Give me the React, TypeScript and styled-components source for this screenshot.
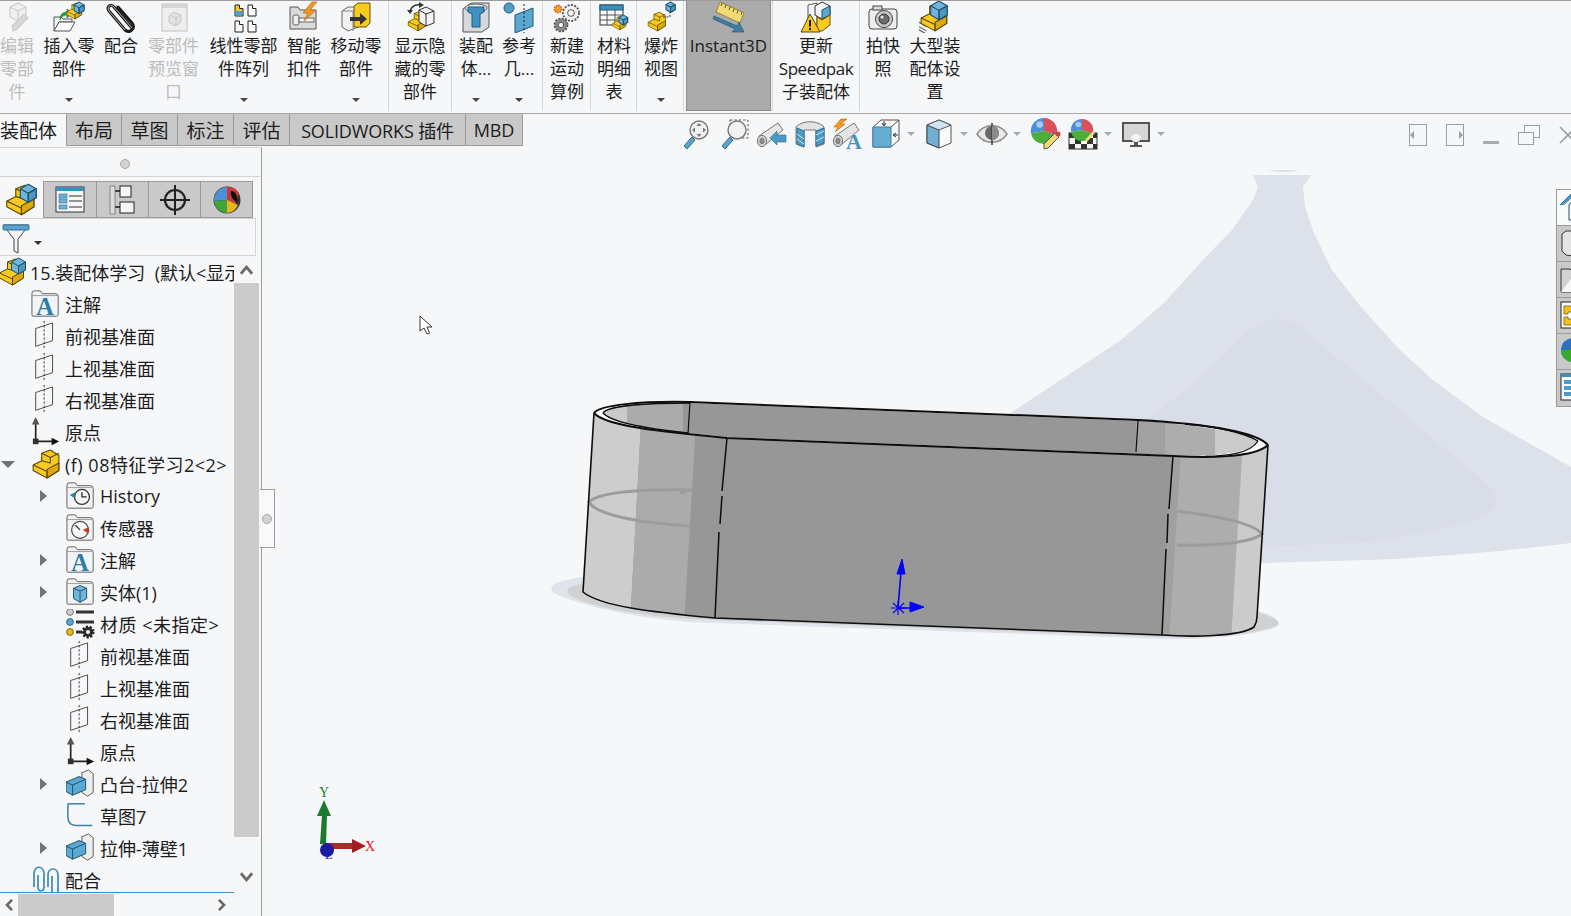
import React from "react";
import styled, { createGlobalStyle } from "styled-components";

const GlobalStyle = createGlobalStyle`
  html, body {
    margin: 0;
    padding: 0;
    background: #f5f7f9;
    overflow: hidden;
  }
  * {
    box-sizing: border-box;
  }
`;

const Page = styled.div`
  width: 1571px;
  height: 916px;
  overflow: hidden;
  display: flex;
  flex-direction: column;
  background: #f5f7f9;
  color: #1c1c1c;
  font-family: "Open Sans", "Noto Sans CJK SC", sans-serif;
`;

/* ---------- ribbon ---------- */

const Ribbon = styled.div`
  height: 114px;
  flex: none;
  display: flex;
  align-items: stretch;
  border-top: 1px solid #9d9d9d;
  border-bottom: 1px solid #a8a8a8;
  padding-bottom: 2px;
  overflow: hidden;
`;

const Group = styled.div<{ $left: number; $right: number; $line?: boolean }>`
  display: flex;
  gap: 9px;
  padding: 0 ${(p) => p.$right}px 0 ${(p) => p.$left}px;
  border-right: ${(p) => (p.$line === false ? "0" : "1px solid #d4d6d8")};
`;

const Item = styled.div<{ $w: number; $off?: boolean }>`
  width: ${(p) => p.$w}px;
  display: flex;
  flex-direction: column;
  align-items: center;
  font-size: 17px;
  line-height: 23px;
  text-align: center;
  white-space: nowrap;
  color: ${(p) => (p.$off ? "#bcbcbc" : "#1c1c1c")};
`;

const NarrowLine = styled.div`
  letter-spacing: -0.45px;
`;

const Pressed = styled.div`
  width: 85px;
  margin-left: 2px;
  margin-right: 1px;
  background: #ababab;
  border: 1px solid #8a8a8a;
  border-top: 0;
  display: flex;
  justify-content: center;
`;

const IconSlot = styled.div`
  height: 32px;
  flex: none;
  margin-bottom: 1px;
  display: flex;
  align-items: center;
  justify-content: center;
`;

const Caret = styled.span`
  margin-top: auto;
  margin-bottom: 9px;
  width: 0;
  height: 0;
  border-left: 4px solid transparent;
  border-right: 4px solid transparent;
  border-top: 4px solid #444;
`;

/* ---------- tab row ---------- */

const TabRow = styled.div`
  height: 33px;
  flex: none;
  display: flex;
  align-items: flex-start;
`;

const Tabs = styled.div`
  display: flex;
  height: 32px;
`;

const Tab = styled.div<{ $w: number; $on?: boolean; $latin?: boolean }>`
  width: ${(p) => p.$w}px;
  background: ${(p) => (p.$on ? "#f5f7f9" : "#c9c9c9")};
  border: 1px solid #9a9a9a;
  border-width: ${(p) => (p.$on ? "0 1px 0 0" : "0 1px 1px 0")};
  display: flex;
  align-items: center;
  justify-content: ${(p) => (p.$on ? "flex-start" : "center")};
  font-size: ${(p) => (p.$latin ? "18px" : "19px")};
  letter-spacing: ${(p) => (p.$latin ? "-0.15px" : "0")};
  white-space: nowrap;
`;

const Hud = styled.div`
  display: flex;
  align-items: center;
  gap: 4px;
  margin-left: 156px;
  height: 40px;
`;

const HudIcon = styled.div`
  width: 34px;
  height: 34px;
  display: flex;
  align-items: center;
  justify-content: center;
`;

const HudWithCaret = styled.div`
  display: flex;
  align-items: center;
  width: 49px;
`;

const HudCaret = styled.span`
  width: 0;
  height: 0;
  margin-left: 4px;
  border-left: 4px solid transparent;
  border-right: 4px solid transparent;
  border-top: 4px solid #a5adb2;
`;

const WinControls = styled.div`
  margin-left: auto;
  display: flex;
  gap: 19px;
  align-items: flex-start;
  padding-top: 10px;
`;

const WinIcon = styled.svg`
  display: block;
  flex: none;
`;

/* ---------- main area ---------- */

const Main = styled.div`
  flex: 1;
  min-height: 0;
  display: flex;
`;

const Sidebar = styled.aside`
  width: 262px;
  flex: none;
  position: relative;
  display: flex;
  flex-direction: column;
  border-right: 1px solid #9c9c9c;
`;

const HandleRow = styled.div`
  height: 30px;
  flex: none;
  width: 260px;
  border-top: 1px solid #d2d2d2;
  border-bottom: 1px solid #d2d2d2;
  display: flex;
  align-items: center;
  justify-content: center;
  padding: 4px 10px 0 0;
`;

const Dot = styled.span`
  width: 10px;
  height: 10px;
  border-radius: 50%;
  background: #d2d2d2;
  border: 1px solid #a8a8a8;
`;

const PanelTabs = styled.div`
  display: flex;
  height: 37px;
  flex: none;
  margin-top: 4px;
  width: 253px;
`;

const PanelTab = styled.div<{ $w: number; $on?: boolean }>`
  width: ${(p) => p.$w}px;
  display: flex;
  align-items: center;
  justify-content: center;
  background: ${(p) => (p.$on ? "#f5f7f9" : "#c9c9c9")};
  border: 1px solid #9a9a9a;
  border-width: ${(p) => (p.$on ? "0 1px 0 0" : "1px 1px 1px 0")};
`;

const FilterRow = styled.div`
  height: 38px;
  flex: none;
  width: 256px;
  border: 1px solid #d4d4d4;
  border-left: 0;
  display: flex;
  align-items: center;
  gap: 1px;
  padding: 3px 0 0 1px;
`;

const FilterCaret = styled.span`
  width: 0;
  height: 0;
  margin-top: 8px;
  border-left: 4px solid transparent;
  border-right: 4px solid transparent;
  border-top: 4px solid #333;
`;

const TreeArea = styled.div`
  height: 637px;
  flex: none;
  display: flex;
`;

const TreeCol = styled.div`
  width: 234px;
  flex: none;
  overflow: hidden;
  border-bottom: 1px solid #3a8fc9;
`;

const Row = styled.div<{ $level: number }>`
  height: 32px;
  display: flex;
  align-items: center;
  padding-left: ${(p) => (p.$level - 1) * 35}px;
  font-size: 18px;
  white-space: nowrap;
`;

const RootRow = styled(Row)`
  padding-left: 0;
`;

const RootIcon = styled.div`
  width: 30px;
  flex: none;
  display: flex;
  margin-left: -2px;
  margin-right: 2px;
`;

const RowLabel = styled.span<{ $wide?: boolean }>`
  letter-spacing: ${(p) => (p.$wide ? "0.5px" : "0")};
`;

const Toggle = styled.div`
  width: 16px;
  margin-right: 15px;
  flex: none;
  display: flex;
  justify-content: center;
`;

const RowIcon = styled.div`
  width: 30px;
  height: 30px;
  flex: none;
  margin-right: 4px;
  display: flex;
  align-items: center;
  justify-content: center;
`;

const ArrowRight = styled.span`
  width: 0;
  height: 0;
  border-top: 6px solid transparent;
  border-bottom: 6px solid transparent;
  border-left: 7px solid #6e7478;
`;

const ArrowDown = styled.span`
  width: 0;
  height: 0;
  border-left: 7px solid transparent;
  border-right: 7px solid transparent;
  border-top: 7px solid #6e7478;
`;

const VScroll = styled.div`
  width: 25px;
  flex: none;
  display: flex;
  flex-direction: column;
  align-items: stretch;
`;

const ScrollBtn = styled.div<{ $h: number }>`
  height: ${(p) => p.$h}px;
  flex: none;
  display: flex;
  align-items: center;
  justify-content: center;
`;

const VThumb = styled.div`
  height: 554px;
  flex: none;
  background: #cbcbcb;
`;

const HScroll = styled.div`
  flex: 1;
  width: 234px;
  display: flex;
  align-items: stretch;
  padding-top: 1px;
`;

const HThumb = styled.div`
  width: 96px;
  background: #cbcbcb;
`;

const HBtn = styled.div<{ $w: number; $end?: boolean }>`
  width: ${(p) => p.$w}px;
  display: flex;
  align-items: center;
  justify-content: ${(p) => (p.$end ? "flex-end" : "center")};
`;

const Splitter = styled.div`
  position: absolute;
  left: 260px;
  top: 342px;
  width: 15px;
  height: 59px;
  background: #f7f9fa;
  border: 1px solid #9c9c9c;
  border-left: 0;
  display: flex;
  align-items: center;
  justify-content: center;
`;

const Viewport = styled.main`
  flex: 1;
  position: relative;
  min-width: 0;
`;

const Scene = styled.svg`
  display: block;
  width: 100%;
  height: 100%;
`;

const TaskPane = styled.div`
  position: absolute;
  top: 42px;
  right: 0;
  width: 15px;
  border: 1px solid #9a9a9a;
  border-right: 0;
  overflow: hidden;
`;

const TaskTab = styled.div<{ $on?: boolean }>`
  height: 36px;
  background: ${(p) => (p.$on ? "#f7f9fa" : "#c9c9c9")};
  border-bottom: 1px solid #9a9a9a;
  padding: 3px 0 0 3px;
  &:last-child {
    border-bottom: 0;
  }
`;

/* ---------- drawn icons ---------- */

type Ic = React.FC<{ s?: number }>;
const Svg: React.FC<{ s?: number; v?: string; children: React.ReactNode }> = ({ s = 32, v = "0 0 32 32", children }) => (
  <svg width={s} height={s} viewBox={v} style={{ display: "block", flex: "none" }}>
    {children}
  </svg>
);

const YellowBlock = () => (
  <g stroke="#5c4700" strokeWidth="1" strokeLinejoin="round">
    <path d="M3 17 L11 13 L11 6 L19 3 L27 8 L27 22 L16 29 L3 22Z" fill="#f7ca1f" />
    <path d="M16 29 L27 22 L27 15 L16 21Z" fill="#dca80e" />
    <path d="M3 17 L16 23 V29" fill="none" />
    <path d="M11 6 L19 10 L27 6 M19 10 V15 L11 13" fill="none" />
  </g>
);

const BlueCube: React.FC<{ x?: number; y?: number; k?: number }> = ({ x = 0, y = 0, k = 1 }) => (
  <g transform={`translate(${x} ${y}) scale(${k})`} stroke="#1d4f6b" strokeWidth={1 / k} strokeLinejoin="round">
    <path d="M0 4 L7 0 L14 4 V12 L7 16 L0 12Z" fill="#6fb5dc" />
    <path d="M7 8 L14 4 V12 L7 16Z" fill="#4d97c2" />
    <path d="M0 4 L7 8 L14 4 M7 8 V16" fill="none" />
  </g>
);

const Assembly: Ic = ({ s = 32 }) => (
  <Svg s={s} v="2 1 29 30">
    <YellowBlock />
    <BlueCube x={15} y={2} k={1} />
  </Svg>
);

const PartYellow: Ic = ({ s = 30 }) => (
  <Svg s={s} v="2 2 26 28">
    <YellowBlock />
  </Svg>
);

const EditPart: Ic = () => (
  <Svg>
    <g stroke="#cdcdcd" fill="#eef0f2" strokeWidth="1.2">
      <path d="M9 6 L17 2 L25 6 V16 L17 20 L9 16Z" />
      <path d="M9 6 L17 10 L25 6 M17 10 V20" fill="none" />
      <path d="M12 30 L11 25 L23 13 L27 17 L15 29Z" fill="#d8d8d8" />
    </g>
  </Svg>
);

const InsertPart: Ic = () => (
  <Svg>
    <path d="M1 30 L1 16 L8 16 L10 18 L19 18 L19 21 L6 21 L1 30Z" fill="#f4f5f6" stroke="#555" />
    <path d="M1 30 L6 21 L22 21 L17 30Z" fill="#f9fafb" stroke="#555" />
    <path d="M7 19 C7 13 10 11 14 11 L14 8 L19 12.5 L14 17 L14 14 C11 14 9 15 7 19Z" fill="#25a044" stroke="#176b2c" strokeWidth="0.6" />
    <g transform="translate(12 0) scale(.62)">
      <YellowBlock />
    </g>
    <BlueCube x={21} y={1} k={0.72} />
  </Svg>
);

const PaperClip: Ic = () => (
  <Svg>
    <path d="M27 27 L9 6 C6 2 1 6 4 10 L20 29 C25 33 31 27 27 22 L13 6" fill="none" stroke="#1b1b1b" strokeWidth="3" strokeLinecap="round" />
    <path d="M27 27 L9 6 C6 2 1 6 4 10 L20 29" fill="none" stroke="#c4c4c4" strokeWidth="0.9" />
  </Svg>
);

const PreviewWin: Ic = () => (
  <Svg>
    <rect x="4" y="3" width="25" height="27" fill="#eceeef" stroke="#cfcfcf" strokeWidth="1.4" />
    <rect x="4" y="3" width="25" height="4" fill="#d5d5d5" />
    <path d="M11 15 L16 11 L23 14 V21 L17 25 L11 21Z" fill="#e2e2e2" stroke="#c6c6c6" />
    <path d="M14 15 L18 17 L23 14 M18 17 V25" fill="none" stroke="#c6c6c6" />
  </Svg>
);

const Mini: React.FC<{ x: number; y: number; on?: boolean }> = ({ x, y, on }) => (
  <g transform={`translate(${x} ${y})`}>
    <path d="M0 0 H4.5 V3.5 H8 V11 H0Z" fill={on ? "#f5c81e" : "#f7f8f9"} stroke="#222" />
    {on && <rect x="0.5" y="6" width="7" height="4.5" fill="#4aa3d0" />}
  </g>
);

const LinearPattern: Ic = () => (
  <Svg>
    <Mini x={7} y={4} on />
    <Mini x={20} y={4} />
    <Mini x={7} y={20} />
    <Mini x={20} y={20} />
  </Svg>
);

const SmartFastener: Ic = () => (
  <Svg>
    <path d="M2 28 V6 H10 L12 9 H28 V28Z" fill="#d9dadb" stroke="#555" />
    <rect x="5" y="14" width="6" height="10" rx="2" fill="#f0f0f0" stroke="#666" />
    <rect x="11" y="17" width="15" height="4" fill="#f3f3f3" stroke="#666" />
    <path d="M24 1 L15 12 L20 12 L16 20 L28 9 L22 9 L29 1Z" fill="#f39a1e" stroke="#b36a08" strokeWidth="0.7" />
  </Svg>
);

const MovePart: Ic = () => (
  <Svg>
    <path d="M2 10 L8 6 L18 6 V26 L8 30 L2 26Z" fill="#f1f1f1" stroke="#666" />
    <path d="M2 10 H13 V30" fill="none" stroke="#888" />
    <path d="M14 5 L18 2 H30 V22 L26 26 H14Z" fill="#f7ca1f" stroke="#6b5300" />
    <path d="M10 16 H20 V12 L27 18 L20 24 V20 H10Z" fill="#333" />
  </Svg>
);

const ShowHidden: Ic = () => (
  <Svg>
    <g transform="translate(2 8) scale(.75)">
      <YellowBlock />
    </g>
    <path d="M15 9 L22 6 L30 10 V22 L22 25 L15 21Z" fill="#f4f4f4" stroke="#333" />
    <path d="M15 9 L22 13 L30 10 M22 13 V25" fill="none" stroke="#333" />
    <path d="M6 11 C7 5 12 3 17 4" fill="none" stroke="#333" strokeWidth="1.6" />
    <path d="M3 9 L9 9 L6 13Z M15 1 L20 4 L15 7Z" fill="#333" />
  </Svg>
);

const AssemblyFeature: Ic = () => (
  <Svg>
    <path d="M3 8 L11 2 H29 V26 L22 31 H3Z" fill="#d7d8d9" stroke="#555" />
    <ellipse cx="16" cy="7" rx="11" ry="4" fill="#e8e8e8" stroke="#666" />
    <path d="M8 6 H24 V11 L20 13 V26 H12 V13 L8 11Z" fill="#3f92bf" stroke="#1d5a7c" />
  </Svg>
);

const RefGeometry: Ic = () => (
  <Svg>
    <circle cx="6" cy="7" r="5" fill="#4f9fcb" stroke="#1f5b7c" />
    <path d="M12 14 L30 7 V25 L12 32Z" fill="#5aa7d2" stroke="#1f5b7c" />
    <path d="M21 3 V32" stroke="#222" strokeDasharray="2 2" />
  </Svg>
);

const Gear: React.FC<{ x: number; y: number; r: number; c: string }> = ({ x, y, r, c }) => (
  <g transform={`translate(${x} ${y})`}>
    <circle r={r} fill={c} stroke="#555" strokeDasharray="2 1.4" strokeWidth="1.8" />
    <circle r={r * 0.42} fill="#f5f7f9" stroke="#555" />
  </g>
);

const Motion: Ic = () => (
  <Svg>
    <Gear x={20} y={12} r={8} c="#f2f2f2" />
    <Gear x={10} y={24} r={6.5} c="#8b8b8b" />
    <circle cx="7" cy="8" r="3.6" fill="#f4a623" stroke="#d9501e" strokeDasharray="1.4 1" strokeWidth="1.6" />
  </Svg>
);

const Bom: Ic = () => (
  <Svg>
    <rect x="2" y="4" width="23" height="20" fill="#f8f9fa" stroke="#333" />
    <rect x="2" y="4" width="23" height="5" fill="#3f8fbc" stroke="#1d5a7c" />
    <path d="M2 14 H25 M2 19 H25 M9 9 V24 M17 9 V24" stroke="#555" fill="none" />
    <g transform="translate(13 13) scale(.55)">
      <YellowBlock />
    </g>
    <BlueCube x={21} y={14} k={0.62} />
  </Svg>
);

const Explode: Ic = () => (
  <Svg>
    <g transform="translate(1 9) scale(.72)">
      <YellowBlock />
    </g>
    <path d="M18 16 H25 V9" fill="none" stroke="#333" strokeDasharray="2 1.5" />
    <BlueCube x={21} y={1} k={0.65} />
  </Svg>
);

const Instant3D: Ic = () => (
  <Svg s={34} v="0 0 34 32">
    <path d="M4 11 L8 1 L32 12 L28 22Z" fill="#eedb76" stroke="#7a6a18" strokeWidth="0.7" />
    <path d="M10 2 L9 5 M14 4 L13 7 M18 6 L17 9 M22 8 L21 11 M26 9.5 L25 12.5 M30 11 L29 14" stroke="#6d5e10" />
    <path d="M2 15 L25 25 L27 21 L32 31 L20 31 L23 28 L1 18Z" fill="#3f7ea3" stroke="#23536f" strokeWidth="0.6" />
  </Svg>
);

const Speedpak: Ic = () => (
  <Svg>
    <path d="M8 4 L17 2 L17 28 L8 26Z" fill="#f5f6f7" stroke="#555" />
    <path d="M15 5 L22 1 L30 5 V14 L22 18 L15 14Z" fill="#f4f5f6" stroke="#333" />
    <path d="M22 9 L30 5 V14 L22 18Z" fill="#5ba8d2" stroke="#1d4f6b" />
    <path d="M17 16 L22 19 L30 14 V24 L22 30 H17Z" fill="#f7ca1f" stroke="#6b5300" />
    <path d="M10 13 L20 31 H1Z" fill="#f7c81e" stroke="#5c4700" />
    <path d="M10 19 V25.5" stroke="#111" strokeWidth="2" />
    <circle cx="10" cy="28" r="1.2" fill="#111" />
  </Svg>
);

const Camera: Ic = () => (
  <Svg>
    <rect x="2" y="8" width="28" height="20" rx="3" fill="#eceded" stroke="#444" />
    <rect x="6" y="5" width="9" height="4" fill="#dadada" stroke="#444" />
    <circle cx="17" cy="18" r="8.5" fill="#c7c8c9" stroke="#444" />
    <circle cx="17" cy="18" r="5" fill="#6c6d6e" stroke="#333" />
    <circle cx="15" cy="16" r="1.6" fill="#e5e5e5" />
  </Svg>
);

const LargeAssembly: Ic = () => (
  <Svg v="1 1 30 30">
    <path d="M1 25 L8 29 M1 21 L8 25 M1 28 L8 32" stroke="#555" />
    <YellowBlock />
    <BlueCube x={12} y={1} k={1.1} />
  </Svg>
);

/* hud */

const Lens: React.FC<{ children?: React.ReactNode }> = ({ children }) => (
  <>
    <path d="M12 19 L4 28 L7 31 L15 22Z" fill="#5ba3c9" stroke="#2e6e90" />
    {children}
    <circle cx="19" cy="12" r="9" fill="#eff1f2" stroke="#777" strokeWidth="1.4" />
  </>
);

const ZoomFit: Ic = () => (
  <Svg>
    <Lens />
    <path d="M19 5 L21.5 8 H16.5Z M19 19 L21.5 16 H16.5Z M12 12 L15 9.5 V14.5Z M26 12 L23 9.5 V14.5Z" fill="#777" />
  </Svg>
);

const ZoomArea: Ic = () => (
  <Svg>
    <rect x="12" y="2" width="18" height="18" fill="none" stroke="#555" strokeDasharray="2.4 2" />
    <Lens />
  </Svg>
);

const Binocular = () => (
  <g stroke="#777" strokeWidth="1">
    <path d="M3 18 L22 5 L27 12 L9 27Z" fill="#e4e5e6" />
    <ellipse cx="6" cy="23" rx="4.6" ry="5.6" fill="#cfd0d1" />
    <ellipse cx="6" cy="23" rx="2" ry="2.8" fill="#8f9091" />
  </g>
);

const PrevView: Ic = () => (
  <Svg>
    <Binocular />
    <path d="M14 20 L21 13 V17 H30 V24 H21 V27Z" fill="#4c98c4" stroke="#2e6e90" strokeWidth="0.6" />
  </Svg>
);

const SectionView: Ic = () => (
  <Svg>
    <path d="M2 9 C8 2 24 2 30 9 V26 L22 29 V12 H10 V29 L2 26Z" fill="#e2e3e4" stroke="#777" />
    <path d="M3 10 L10 13 V29 L3 26Z M22 13 L30 10 V25 L22 28Z" fill="#4d9cc6" stroke="#2e6e90" />
    <path d="M3 16 L10 21 M3 21 L10 26 M22 17 L30 13 M22 23 L30 19" stroke="#cfe6f2" />
  </Svg>
);

const DynAnnotation: Ic = () => (
  <Svg>
    <Binocular />
    <path d="M9 1 L2 9 L6 9 L3 14 L13 6 L9 6 L15 1Z" fill="#f39a1e" stroke="#b36a08" strokeWidth="0.6" />
    <text x="22" y="31" fontFamily="Liberation Serif" fontWeight="700" fontSize="22" fill="#4a93bd" textAnchor="middle">A</text>
  </Svg>
);

const ViewOrient: Ic = () => (
  <Svg>
    <path d="M3 9 L11 2 H29 V22 L21 29 H3Z" fill="#f5f7f9" stroke="#555" />
    <path d="M3 9 H21 V29 H3Z" fill="#67add3" stroke="#3d7ea4" />
    <path d="M21 9 L29 2" stroke="#555" />
    <path d="M14 3 V7 M12 5 L14 8 L16 5 M28 17 H24 M26 15 L23 17 L26 19" fill="none" stroke="#333" />
  </Svg>
);

const DisplayStyle: Ic = () => (
  <Svg>
    <path d="M4 7 L16 2 L28 7 V25 L16 30 L4 25Z" fill="#f8f9fa" stroke="#555" />
    <path d="M4 7 L16 12 V30 L4 25Z" fill="#6fb0d4" stroke="#444" />
    <path d="M4 7 L16 2 L28 7 L16 12Z" fill="#cfe5f1" stroke="#555" />
  </Svg>
);

const Eye: Ic = () => (
  <Svg>
    <path d="M1 16 C8 5 24 5 31 16 C24 27 8 27 1 16Z" fill="#e8e9ea" stroke="#8c8c8c" strokeWidth="1.4" />
    <circle cx="16" cy="15" r="7" fill="#6a6a6a" />
    <path d="M16 5 V27" stroke="#444" strokeWidth="1.6" />
    <path d="M16 8 A7 7 0 0 1 16 22Z" fill="#8a8a8a" />
  </Svg>
);

const Globe: React.FC<{ cx?: number; cy?: number; r?: number }> = ({ cx = 15, cy = 13, r = 13 }) => (
  <g transform={`translate(${cx} ${cy}) scale(${r / 12})`}>
    <path d="M0 0 L0 -12 A12 12 0 0 0 -12 2Z" fill="#4f8fd8" />
    <path d="M0 0 L0 -12 A12 12 0 0 1 11.5 4Z" fill="#d9505a" />
    <path d="M0 0 L11.5 4 A12 12 0 0 1 0 12 A12 12 0 0 1 -12 2Z" fill="#4caf3c" />
    <circle cx="-4" cy="-6" r="3" fill="#a9cdf0" />
  </g>
);

const Appearance: Ic = () => (
  <Svg>
    <Globe />
    <path d="M15 31 L15 26 L26 15 L30 19 L19 30Z" fill="#f2d873" stroke="#555" />
    <circle cx="29" cy="16" r="2.5" fill="#c8434b" />
  </Svg>
);

const SceneIcon: Ic = () => (
  <Svg>
    <rect x="2" y="15" width="28" height="16" fill="#f8f8f8" stroke="#333" />
    <path d="M2 15 H8 V20 H2Z M14 15 H20 V20 H14Z M26 15 H30 V20 H26Z M8 20 H14 V26 H8Z M20 20 H26 V26 H20Z M2 26 H8 V31 H2Z M14 26 H20 V31 H14Z M26 26 H30 V31 H26Z" fill="#333" />
    <Globe cx={15} cy={12} r={11} />
    <path d="M18 22 L26 13 L28 15 L20 24Z" fill="#f2d873" />
  </Svg>
);

const Monitor: Ic = () => (
  <Svg>
    <rect x="3" y="5" width="26" height="18" fill="#d6d6d6" stroke="#555" strokeWidth="2" />
    <ellipse cx="16" cy="20" rx="5" ry="4" fill="#f4f4f4" />
    <path d="M14 24 H18 V27 H22 V29 H10 V27 H14Z" fill="#555" />
  </Svg>
);

/* panel tab icons */

const FeatureList: Ic = () => (
  <Svg>
    <rect x="2" y="3" width="28" height="25" fill="#f6f7f8" stroke="#333" />
    <rect x="2" y="3" width="28" height="4" fill="#3f8fbc" />
    {[10, 15, 21].map((y) => (
      <g key={y}>
        <rect x="5" y={y} width="8" height="4" fill="#6fb0d4" stroke="#2e6e90" strokeWidth="0.6" />
        <path d={`M15 ${y + 2} H28`} stroke="#333" />
      </g>
    ))}
  </Svg>
);

const PropertyTree: Ic = () => (
  <Svg>
    <path d="M6 3 V29 M6 7 H13 M6 23 H13" stroke="#444" strokeWidth="2" fill="none" />
    <rect x="13" y="2" width="11" height="11" fill="#f4f5f6" stroke="#222" />
    <rect x="13" y="18" width="14" height="11" fill="#f4f5f6" stroke="#222" />
    <rect x="3" y="2" width="5" height="28" fill="#dcdddd" stroke="#666" strokeWidth="0.7" />
  </Svg>
);

const Crosshair: Ic = () => (
  <Svg>
    <circle cx="16" cy="16" r="10" fill="none" stroke="#222" strokeWidth="2.2" />
    <path d="M16 1 V31 M1 16 H31" stroke="#222" strokeWidth="2" />
  </Svg>
);

const DisplayBall: Ic = () => (
  <Svg>
    <circle cx="16" cy="16" r="13.5" fill="#333" />
    <path d="M16 16 L16 3 A13 13 0 0 0 3 17Z" fill="#4f8fd8" />
    <path d="M16 16 L16 3 A13 13 0 0 1 28 9 L24 22Z" fill="#c83a3a" />
    <path d="M16 16 L3 17 A13 13 0 0 0 16 29Z" fill="#3fa53a" />
    <path d="M16 16 L16 29 A13 13 0 0 0 27 21Z" fill="#e2b820" />
    <path d="M20 7 C25 7 27 12 26 19 C22 16 19 12 20 7Z" fill="#111" />
  </Svg>
);

const Funnel: Ic = () => (
  <Svg>
    <path d="M2 2 H28 L17 16 V30 L13 28 V16Z" fill="#f3f4f5" stroke="#444" />
    <rect x="2" y="2" width="26" height="5" rx="1" fill="#5aa5cf" stroke="#2e6e90" />
  </Svg>
);

/* tree icons */

const Folder: React.FC<{ children?: React.ReactNode }> = ({ children }) => (
  <Svg s={30}>
    <path d="M1 5 Q1 2 3 2 H10 L12 5 H26 Q29 5 29 8 V27 Q29 29 27 29 H2 Q1 29 1 27Z" fill="#f3f4f5" stroke="#5a5a5a" />
    <path d="M1 7 H29" stroke="#9a9a9a" />
    {children}
  </Svg>
);

const LetterA = () => (
  <text x="15" y="28" textAnchor="middle" fontFamily="Liberation Serif" fontWeight="700" fontSize="26" fill="#2e7ca8">A</text>
);

const NotesFolder = () => (
  <Folder>
    <LetterA />
  </Folder>
);

const HistoryFolder = () => (
  <Folder>
    <circle cx="17" cy="17" r="8" fill="#f7f7f7" stroke="#333" strokeWidth="1.4" />
    <path d="M17 12 V17 H22" fill="none" stroke="#222" strokeWidth="1.4" />
    <path d="M4 15 L10 12 V19Z" fill="#2e7ca8" />
  </Folder>
);

const SensorFolder = () => (
  <Folder>
    <circle cx="15" cy="18" r="9" fill="#f7f7f7" stroke="#444" strokeWidth="1.3" />
    <path d="M15 18 L10 13" stroke="#333" strokeWidth="1.4" />
    <path d="M18 18 L24 15 L24 22Z" fill="#d8362a" />
  </Folder>
);

const SolidFolder = () => (
  <Folder>
    <path d="M8 12 L15 9 L22 12 V23 L15 27 L8 23Z" fill="#6fb5dc" stroke="#1d4f6b" />
    <path d="M8 12 L15 15 L22 12 M15 15 V27" fill="none" stroke="#1d4f6b" />
  </Folder>
);

const Plane = () => (
  <Svg s={30}>
    <path d="M5 8 L23 2 V21 L5 27Z" fill="none" stroke="#444" />
    <path d="M14 0 V30" stroke="#333" strokeDasharray="2.4 2" />
  </Svg>
);

const Origin = () => (
  <Svg s={30}>
    <path d="M5 2 V26 H27" fill="none" stroke="#222" strokeWidth="1.8" />
    <path d="M5 0 L9 8 H1Z" fill="#555" />
    <path d="M30 26 L22 22 V30Z" fill="#111" />
    <rect x="2" y="23" width="6" height="6" fill="#333" />
  </Svg>
);

const Material = () => (
  <Svg s={30} v="0 0 30 30">
    <circle cx="4" cy="3" r="3.4" fill="#cfcfcf" stroke="#777" />
    <circle cx="4" cy="13" r="3.4" fill="#5aa5cf" stroke="#2e6e90" />
    <circle cx="4" cy="23" r="3.4" fill="#e8b81c" stroke="#8a6c00" />
    <path d="M10 3 H28 M10 13 H28 M10 23 H16" stroke="#333" strokeWidth="3" />
    <circle cx="22" cy="23" r="5" fill="#333" stroke="#222" strokeWidth="3" strokeDasharray="2 1.5" />
    <circle cx="22" cy="23" r="2" fill="#f5f7f9" />
  </Svg>
);

const Extrude = () => (
  <Svg s={30}>
    <path d="M17 4 L24 1 L29 5 V25 L23 29 L17 25Z" fill="#eceded" stroke="#555" />
    <path d="M0 14 L14 8 L21 11 V22 L7 28 L0 24Z" fill="#5ba8d2" stroke="#1d4f6b" />
    <path d="M0 14 L7 17 L21 11 M7 17 V28" fill="none" stroke="#1d4f6b" />
  </Svg>
);

const SketchIcon = () => (
  <Svg s={30}>
    <path d="M2 3 V17 Q2 26 11 26 H28" fill="none" stroke="#3a7fa8" strokeWidth="1.6" />
    <path d="M2 3 H20" stroke="#3a7fa8" strokeWidth="1.6" />
  </Svg>
);

const BlueClips = () => (
  <Svg s={30} v="0 0 30 30">
    <path d="M3 22 V9 C3 0 13 0 13 9 V22 C13 27 7 27 7 22 V10" fill="none" stroke="#3a8ab8" strokeWidth="1.7" />
    <path d="M17 22 V10 C17 2 27 2 27 10 V28 M21 28 V11" fill="none" stroke="#3a8ab8" strokeWidth="1.7" />
  </Svg>
);

const Chevron: React.FC<{ dir: "up" | "down" | "left" | "right" }> = ({ dir }) => {
  const d = { up: "M2 10 L8 3 L14 10", down: "M2 2 L8 9 L14 2", left: "M10 1 L4 7 L10 13", right: "M4 1 L10 7 L4 13" }[dir];
  const v = dir === "up" || dir === "down" ? "0 0 16 12" : "0 0 14 14";
  return (
    <svg width={dir === "up" || dir === "down" ? 15 : 13} height={12} viewBox={v}>
      <path d={d} fill="none" stroke="#6a6a6a" strokeWidth="3" />
    </svg>
  );
};

/* ---------- data ---------- */

interface RibbonItem {
  w: number;
  lines: string[];
  Icon: Ic;
  off?: boolean;
  caret?: boolean;
}

const ribbonGroups: { left: number; right: number; line?: boolean; items: RibbonItem[] }[] = [
  {
    left: 0,
    right: 6,
    items: [
      { w: 34, lines: ["编辑", "零部", "件"], Icon: EditPart, off: true },
      { w: 52, lines: ["插入零", "部件"], Icon: InsertPart, caret: true },
      { w: 34, lines: ["配合"], Icon: PaperClip },
      { w: 53, lines: ["零部件", "预览窗", "口"], Icon: PreviewWin, off: true },
      { w: 69, lines: ["线性零部", "件阵列"], Icon: LinearPattern, caret: true },
      { w: 34, lines: ["智能", "扣件"], Icon: SmartFastener },
      { w: 52, lines: ["移动零", "部件"], Icon: MovePart, caret: true },
    ],
  },
  { left: 5, right: 5, items: [{ w: 52, lines: ["显示隐", "藏的零", "部件"], Icon: ShowHidden }] },
  {
    left: 7,
    right: 6,
    items: [
      { w: 34, lines: ["装配", "体..."], Icon: AssemblyFeature, caret: true },
      { w: 34, lines: ["参考", "几..."], Icon: RefGeometry, caret: true },
    ],
  },
  { left: 7, right: 6, items: [{ w: 34, lines: ["新建", "运动", "算例"], Icon: Motion }] },
  { left: 6, right: 5, items: [{ w: 34, lines: ["材料", "明细", "表"], Icon: Bom }] },
  { left: 7, right: 5, items: [{ w: 34, lines: ["爆炸", "视图"], Icon: Explode, caret: true }] },
];

const ribbonTail: { left: number; right: number; line?: boolean; items: RibbonItem[] }[] = [
  { left: 5, right: 5, items: [{ w: 76, lines: ["更新", "Speedpak", "子装配体"], Icon: Speedpak }] },
  {
    left: 6,
    right: 0,
    line: false,
    items: [
      { w: 34, lines: ["拍快", "照"], Icon: Camera },
      { w: 52, lines: ["大型装", "配体设", "置"], Icon: LargeAssembly },
    ],
  },
];

const tabs = [
  { w: 67, label: "装配体", on: true },
  { w: 55, label: "布局" },
  { w: 56, label: "草图" },
  { w: 56, label: "标注" },
  { w: 56, label: "评估" },
  { w: 176, label: "SOLIDWORKS 插件", latin: true },
  { w: 57, label: "MBD", latin: true },
];

const hudItems: { Icon: Ic; caret?: boolean }[] = [
  { Icon: ZoomFit },
  { Icon: ZoomArea },
  { Icon: PrevView },
  { Icon: SectionView },
  { Icon: DynAnnotation },
  { Icon: ViewOrient, caret: true },
  { Icon: DisplayStyle, caret: true },
  { Icon: Eye, caret: true },
  { Icon: Appearance },
  { Icon: SceneIcon, caret: true },
  { Icon: Monitor, caret: true },
];

const treeRows: { level: number; label: string; Icon: React.FC; toggle?: "right" | "down"; wide?: boolean }[] = [
  { level: 1, label: "注解", Icon: NotesFolder },
  { level: 1, label: "前视基准面", Icon: Plane },
  { level: 1, label: "上视基准面", Icon: Plane },
  { level: 1, label: "右视基准面", Icon: Plane },
  { level: 1, label: "原点", Icon: Origin },
  { level: 1, label: "(f) 08特征学习2<2>", Icon: PartYellow, toggle: "down", wide: true },
  { level: 2, label: "History", Icon: HistoryFolder, toggle: "right" },
  { level: 2, label: "传感器", Icon: SensorFolder },
  { level: 2, label: "注解", Icon: NotesFolder, toggle: "right" },
  { level: 2, label: "实体(1)", Icon: SolidFolder, toggle: "right" },
  { level: 2, label: "材质 <未指定>", Icon: Material, wide: true },
  { level: 2, label: "前视基准面", Icon: Plane },
  { level: 2, label: "上视基准面", Icon: Plane },
  { level: 2, label: "右视基准面", Icon: Plane },
  { level: 2, label: "原点", Icon: Origin },
  { level: 2, label: "凸台-拉伸2", Icon: Extrude, toggle: "right" },
  { level: 2, label: "草图7", Icon: SketchIcon },
  { level: 2, label: "拉伸-薄壁1", Icon: Extrude, toggle: "right" },
  { level: 1, label: "配合", Icon: BlueClips },
];

const renderGroups = (groups: typeof ribbonGroups) =>
  groups.map((g, i) => (
    <Group key={i} $left={g.left} $right={g.right} $line={g.line}>
      {g.items.map((it) => (
        <Item key={it.lines.join("")} $w={it.w} $off={it.off}>
          <IconSlot>
            <it.Icon />
          </IconSlot>
          {it.lines.map((l) => (l === "Speedpak" ? <NarrowLine key={l}>{l}</NarrowLine> : <div key={l}>{l}</div>))}
          {it.caret && <Caret />}
        </Item>
      ))}
    </Group>
  ));

/* ---------- the model in the graphics area, drawn in page coordinates ---------- */

const BODY =
  "M594 413 L583 592 C600 606 650 612 715 618 L1162 635 C1190 637 1240 637 1254 627 Q1257 622 1257 617 L1268 445 C1255 458 1205 458 1173 456 L727 438 L688 434 C650 430 605 425 594 413Z";
const INNER =
  "M603 413 C608 406 645 403 690 403 L1138 421 C1185 424 1240 431 1258 441 C1250 454 1205 457 1173 455 L727 437 L688 433 C650 429 612 423 603 413Z";

const Model3D = () => (
  <Scene viewBox="262 147 1309 769" preserveAspectRatio="xMinYMin slice">
    <defs>
      <clipPath id="body">
        <path d={BODY} />
      </clipPath>
      <clipPath id="inner">
        <path d={INNER} />
      </clipPath>
    </defs>

    {/* floor reflection */}
    <path d="M1268 170 Q1285 174 1300 170Z" fill="#dde1ea" />
    <path
      d="M1253 175 H1311 L1303 187 L1305 207 L1314 233 L1332 270 L1361 307 L1400 350 L1433 380 L1483 417 L1571 467 V543 C1500 552 1420 558 1367 560 L1263 563 L1000 420 L1071 373 L1121 340 L1164 303 L1203 260 L1232 230 L1253 200 L1258 187Z"
      fill="#dde1ea"
    />
    <path
      d="M1275 319 C1290 319 1300 326 1307 333 L1370 385 L1417 425 L1483 480 C1495 492 1500 500 1490 512 C1480 522 1420 534 1367 542 L1263 547 L1100 450 L1146 420 L1189 387 L1232 347 C1248 330 1262 319 1275 319Z"
      fill="#d9dde7"
    />

    {/* floor shadow */}
    <path d="M583 577 C560 580 548 585 552 591 C560 600 640 622 715 623 L1163 639 C1200 640 1260 636 1278 626 C1282 620 1270 614 1257 611Z" fill="#dfe3ea" />
    <path d="M583 584 C568 586 564 590 570 595 C590 608 650 618 715 620 L1163 637 C1200 639 1260 634 1278 625 C1280 620 1268 615 1257 612Z" fill="#cfd1d3" />

    {/* outer wall */}
    <path d={BODY} fill="#979797" />
    <g clipPath="url(#body)">
      <path d="M575 405 H642 L630 625 H575Z" fill="#cdcdcd" />
      <path d="M642 405 H697 L684 625 H630Z" fill="#ababab" />
      <path d="M1173 450 H1181 L1169 640 H1161Z" fill="#a0a0a0" />
      <path d="M1181 450 H1243 L1231 640 H1169Z" fill="#adadad" />
      <path d="M1243 440 H1275 L1265 640 H1231Z" fill="#cbcbcb" />
    </g>

    {/* rim and inside walls */}
    <path d="M594 413 C600 405 640 401 690 402 L1138 420 C1190 423 1255 430 1268 445 C1255 458 1205 458 1173 456 L727 438 L688 434 C650 430 605 425 594 413Z" fill="#fbfbfb" />
    <path d={INNER} fill="#979797" />
    <g clipPath="url(#inner)">
      <rect x="600" y="400" width="27" height="40" fill="#c9c9c9" />
      <rect x="627" y="400" width="56" height="40" fill="#ababab" />
      <rect x="1136" y="410" width="29" height="50" fill="#a1a1a1" />
      <rect x="1165" y="410" width="50" height="50" fill="#adadad" />
      <rect x="1215" y="410" width="50" height="50" fill="#cbcbcb" />
    </g>

    {/* section sketch showing through */}
    <g fill="none" stroke="#9c9c9c" strokeWidth="3">
      <path d="M693 490 C640 489 600 492 589 502 C596 515 640 523 690 526" />
      <path d="M1177 511 C1215 516 1252 522 1262 534 C1250 543 1215 546 1177 545" />
    </g>
    <circle cx="683" cy="491" r="3.5" fill="#9c9c9c" />

    {/* edges */}
    <g fill="none" stroke="#0d0d0d" strokeWidth="1.5">
      <path d="M594 413 C600 405 640 401 690 402 L1138 420 C1190 423 1255 430 1268 445" strokeWidth="2" />
      <path d="M594 413 C605 425 650 430 688 434 L727 438 L1173 456 C1205 458 1255 458 1268 445" strokeWidth="2" />
      <path d="M603 413 C612 423 650 429 688 433 M1258 441 C1250 454 1225 456 1205 456.5" strokeWidth="1.3" />
      <path d="M603 413 C608 406 645 403 690 403 M1185 424 C1215 426 1245 433 1258 441" strokeWidth="1.3" />
      <path d="M594 413 L583 592 C600 606 650 612 715 618 L1162 635 C1190 637 1240 637 1254 627 Q1257 622 1257 617 L1268 445" strokeWidth="1.6" />
      <path d="M690 402 L688 434 M1138 421 L1136 452" strokeWidth="1.2" />
      <path d="M727 438 L722 491 M722 496 L720 524 M719 532 L715 618" />
      <path d="M1173 456 L1169 509 M1168 514 L1167 543 M1166 549 L1162 635" />
    </g>

    {/* origin of the part */}
    <g stroke="#0000ff" fill="#0000ff">
      <path d="M898 608 L901 572" strokeWidth="1.6" />
      <path d="M902 559 L905 574 H897Z" />
      <path d="M898 608 H912" strokeWidth="1.6" />
      <path d="M924 607 L910 602 V612Z" />
      <path d="M893 603 L904 613 M904 603 L893 613 M898 601 V615 M891 608 H905" strokeWidth="1.1" />
    </g>

    {/* view triad */}
    <path d="M320 844 L322 815 H327 L326 844Z" fill="#1d7a2c" />
    <path d="M324 800 L331 816 H317Z" fill="#1d7a2c" />
    <path d="M326 843 H353 V849 H326Z" fill="#b5252a" />
    <path d="M366 846 L352 839 V853Z" fill="#a31e22" />
    <circle cx="327" cy="850" r="7" fill="#1c1c9c" />
    <text x="324" y="797" textAnchor="middle" fontFamily="Liberation Serif" fontSize="14" fill="#0f8a1e">Y</text>
    <text x="370" y="851" textAnchor="middle" fontFamily="Liberation Serif" fontSize="14" fill="#f01010">X</text>
    <text x="329" y="859" textAnchor="middle" fontFamily="Liberation Serif" fontSize="12" fill="#1414e0">Z</text>

    {/* mouse pointer */}
    <path d="M420 316 V331 L424 328 L427 334 L429.5 333 L427 327 L432 327Z" fill="#fff" stroke="#222" strokeWidth="0.9" />
  </Scene>
);

const App: React.FC = () => (
  <Page>
    <GlobalStyle />
    <Ribbon>
      {renderGroups(ribbonGroups)}
      <Pressed>
        <Item $w={80}>
          <IconSlot>
            <Instant3D />
          </IconSlot>
          <div>Instant3D</div>
        </Item>
      </Pressed>
      <Group $left={0} $right={0} />
      {renderGroups(ribbonTail)}
    </Ribbon>

    <TabRow>
      <Tabs>
        {tabs.map((t) => (
          <Tab key={t.label} $w={t.w} $on={t.on} $latin={t.latin}>
            {t.label}
          </Tab>
        ))}
      </Tabs>
      <Hud>
        {hudItems.map(({ Icon, caret }, i) =>
          caret ? (
            <HudWithCaret key={i}>
              <HudIcon>
                <Icon s={30} />
              </HudIcon>
              <HudCaret />
            </HudWithCaret>
          ) : (
            <HudIcon key={i}>
              <Icon s={30} />
            </HudIcon>
          ),
        )}
      </Hud>
      <WinControls>
        <WinIcon width="18" height="22" viewBox="0 0 18 22">
          <rect x="0.5" y="0.5" width="17" height="21" fill="none" stroke="#9a9fa3" />
          <path d="M1 11 L5 7 V15Z" fill="#9a9fa3" />
        </WinIcon>
        <WinIcon width="18" height="22" viewBox="0 0 18 22">
          <rect x="0.5" y="0.5" width="17" height="21" fill="none" stroke="#9a9fa3" />
          <path d="M17 11 L13 7 V15Z" fill="#9a9fa3" />
        </WinIcon>
        <WinIcon width="16" height="22" viewBox="0 0 16 22">
          <rect x="0" y="17" width="16" height="3" fill="#a8acb0" />
        </WinIcon>
        <WinIcon width="22" height="22" viewBox="0 0 22 22">
          <rect x="6.5" y="1.5" width="15" height="12" fill="none" stroke="#9a9fa3" />
          <rect x="0.5" y="8.5" width="15" height="12" fill="#f5f7f9" stroke="#9a9fa3" />
        </WinIcon>
        <WinIcon width="12" height="22" viewBox="0 0 12 22">
          <path d="M1 3 L17 19 M17 3 L1 19" stroke="#9a9fa3" strokeWidth="1.6" />
        </WinIcon>
      </WinControls>
    </TabRow>

    <Main>
      <Sidebar>
        <HandleRow>
          <Dot />
        </HandleRow>
        <PanelTabs>
          <PanelTab $w={44} $on>
            <Assembly s={34} />
          </PanelTab>
          <PanelTab $w={53}>
            <FeatureList />
          </PanelTab>
          <PanelTab $w={52}>
            <PropertyTree />
          </PanelTab>
          <PanelTab $w={52}>
            <Crosshair />
          </PanelTab>
          <PanelTab $w={52}>
            <DisplayBall />
          </PanelTab>
        </PanelTabs>
        <FilterRow>
          <Funnel s={28} />
          <FilterCaret />
        </FilterRow>
        <TreeArea>
          <TreeCol>
            <RootRow $level={0}>
              <RootIcon>
                <Assembly s={30} />
              </RootIcon>
              <span>15.装配体学习{"\u00a0\u00a0"}(默认&lt;显示状态-1&gt;)</span>
            </RootRow>
            {treeRows.map((r, i) => (
              <Row key={i} $level={r.level}>
                <Toggle>
                  {r.toggle === "right" && <ArrowRight />}
                  {r.toggle === "down" && <ArrowDown />}
                </Toggle>
                <RowIcon>
                  <r.Icon />
                </RowIcon>
                <RowLabel $wide={r.wide}>{r.label}</RowLabel>
              </Row>
            ))}
          </TreeCol>
          <VScroll>
            <ScrollBtn $h={27}>
              <Chevron dir="up" />
            </ScrollBtn>
            <VThumb />
            <ScrollBtn $h={80}>
              <Chevron dir="down" />
            </ScrollBtn>
          </VScroll>
        </TreeArea>
        <HScroll>
          <HBtn $w={18}>
            <Chevron dir="left" />
          </HBtn>
          <HThumb />
          <HBtn $w={114} $end>
            <Chevron dir="right" />
          </HBtn>
        </HScroll>
        <Splitter>
          <Dot />
        </Splitter>
      </Sidebar>
      <Viewport>
        <Model3D />
        <TaskPane>
          <TaskTab $on>
            <svg width="14" height="30" viewBox="0 0 14 30">
              <path d="M0 12 L12 0 H14 V6 L9 12 V27 H14" fill="#f7f9fa" stroke="#1d4f6b" />
              <path d="M0 12 L12 0 L14 3 L4 12Z" fill="#4d97c2" />
            </svg>
          </TaskTab>
          <TaskTab>
            <svg width="14" height="30" viewBox="0 0 14 30">
              <path d="M2 5 L6 2 H14 V27 L6 26 L2 22Z" fill="#e4e4e4" stroke="#333" />
            </svg>
          </TaskTab>
          <TaskTab>
            <svg width="14" height="30" viewBox="0 0 14 30">
              <path d="M1 4 H10 L14 8 V27 H1Z" fill="#d2d2d2" stroke="#333" />
              <path d="M1 27 L14 10 V27Z" fill="#f7f7f7" />
            </svg>
          </TaskTab>
          <TaskTab>
            <svg width="14" height="30" viewBox="0 0 14 30">
              <rect x="1" y="1" width="14" height="26" fill="#f7f8f9" stroke="#222" />
              <path d="M4 5 H14 V11 H8 V13 H4Z M4 16 H8 V18 H14 V24 H4Z" fill="#f2c11b" stroke="#6b5300" strokeWidth="0.7" />
            </svg>
          </TaskTab>
          <TaskTab>
            <svg width="14" height="30" viewBox="0 0 14 30">
              <circle cx="13" cy="13" r="12" fill="#2f6fc0" />
              <path d="M1 13 A12 12 0 0 0 25 13Z" fill="#39a92e" />
            </svg>
          </TaskTab>
          <TaskTab>
            <svg width="14" height="30" viewBox="0 0 14 30">
              <rect x="1" y="1" width="14" height="26" fill="#f4f6f8" stroke="#222" />
              <rect x="1" y="1" width="14" height="3" fill="#3f8fbc" />
              <rect x="4" y="7" width="10" height="4" fill="#4d9cc6" />
              <rect x="4" y="13" width="10" height="4" fill="#4d9cc6" />
              <rect x="4" y="19" width="10" height="4" fill="#4d9cc6" />
            </svg>
          </TaskTab>
        </TaskPane>
      </Viewport>
    </Main>
  </Page>
);

export default App;
